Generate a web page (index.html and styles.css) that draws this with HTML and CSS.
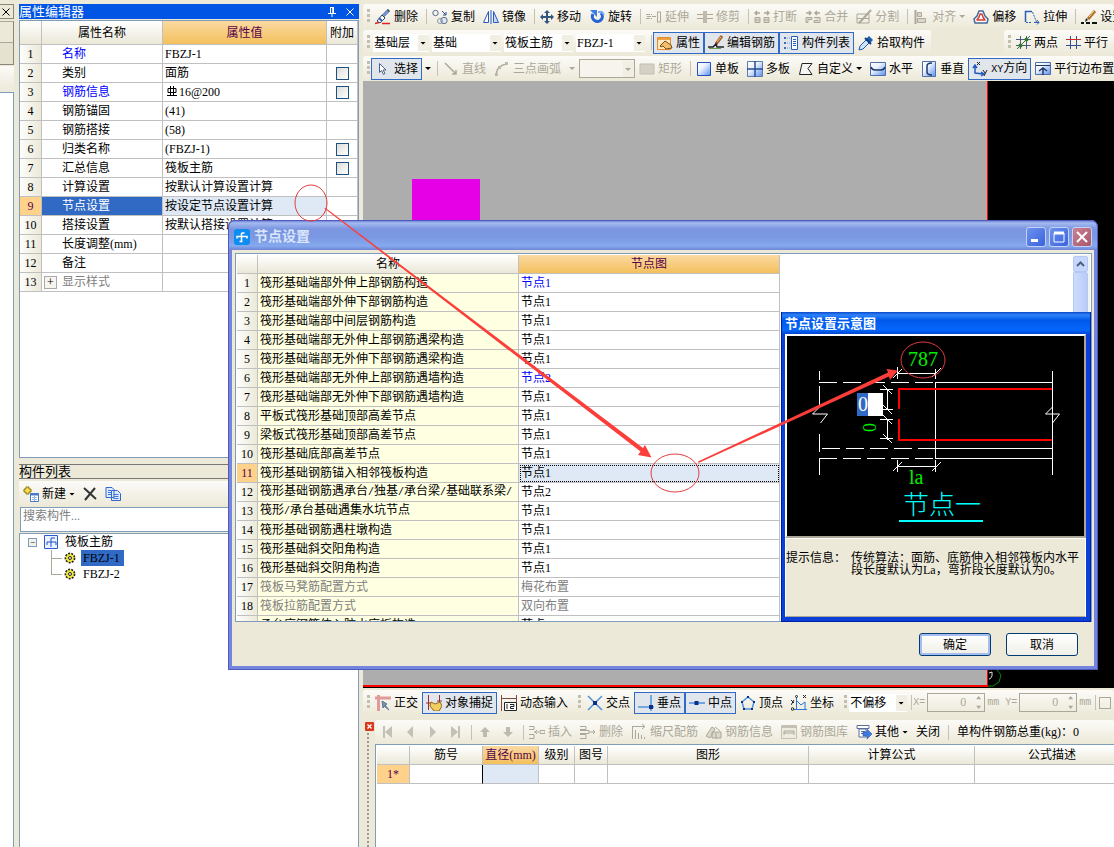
FILE: index.html
```html
<!DOCTYPE html>
<html lang="zh-CN">
<head>
<meta charset="utf-8">
<title>节点设置</title>
<link rel="stylesheet" href="styles.css">
</head>
<body>
<svg class="defs" aria-hidden="true">
  <defs>
    <linearGradient id="blueFill" x1="0" y1="0" x2="1" y2="1"><stop offset="0" stop-color="#fff"/><stop offset="0.4" stop-color="#eaf1fe"/><stop offset="1" stop-color="#5b8ff0"/></linearGradient>
    <symbol id="gear" viewBox="0 0 12 12"><circle cx="6" cy="6" r="4.6" fill="#f4ea3a" stroke="#222" stroke-width="1.6" stroke-dasharray="2 1.2"/><circle cx="6" cy="6" r="1.5" fill="#fff" stroke="#222"/></symbol>
  </defs>
</svg>

<div class="app">
  <aside class="edge">
    <button class="edge-close" aria-label="关闭侧栏"><svg width="8" height="8" viewBox="0 0 8 8"><path d="M.5.5l7 7M7.5.5l-7 7" stroke="#000"/></svg></button>
    <div class="edge-head"></div>
    <div class="edge-tab"></div>
    <div class="edge-tool"></div>
    <div class="edge-body"></div>
  </aside>

  <div class="dock">
    <section class="props">
      <header class="dock-title"><h2>属性编辑器</h2>
        <button aria-label="固定"><svg width="8" height="10" viewBox="0 0 8 10"><path d="M2 .5h4M2.500 0v6M5.500 0v6M4.700 0v6M0 6.500h8M4 7v3" stroke="#fff" fill="none"/></svg></button>
        <button aria-label="关闭"><svg width="8" height="8" viewBox="0 0 8 8"><path d="M.5.5l7 7M7.5.5l-7 7" stroke="#fff"/></svg></button>
      </header>
      <div class="props-frame">
        <table class="grid props-grid">
          <colgroup><col class="c-num"><col class="c-name"><col class="c-val"><col class="c-add"></colgroup>
          <thead><tr><th></th><th>属性名称</th><th class="hot">属性值</th><th>附加</th></tr></thead>
          <tbody>
            <tr><th>1</th><td class="blue">名称</td><td>FBZJ-1</td><td></td></tr>
            <tr><th>2</th><td>类别</td><td>面筋</td><td><input type="checkbox" aria-label="附加类别"></td></tr>
            <tr><th>3</th><td class="blue">钢筋信息</td><td><svg class="rebar" width="10" height="10" viewBox="0 0 10 10"><path d="M1 2.500h8v4H1zM3.500 0v9M6.500 0v9M0 9.500h10" stroke="#000" fill="none"/></svg>16@200</td><td><input type="checkbox" aria-label="附加钢筋信息"></td></tr>
            <tr><th>4</th><td>钢筋锚固</td><td>(41)</td><td></td></tr>
            <tr><th>5</th><td>钢筋搭接</td><td>(58)</td><td></td></tr>
            <tr><th>6</th><td>归类名称</td><td>(FBZJ-1)</td><td><input type="checkbox" aria-label="附加归类名称"></td></tr>
            <tr><th>7</th><td>汇总信息</td><td>筏板主筋</td><td><input type="checkbox" aria-label="附加汇总信息"></td></tr>
            <tr><th>8</th><td>计算设置</td><td>按默认计算设置计算</td><td></td></tr>
            <tr class="current"><th>9</th><td>节点设置</td><td>按设定节点设置计算</td><td></td></tr>
            <tr><th>10</th><td>搭接设置</td><td>按默认搭接设置计算</td><td></td></tr>
            <tr><th>11</th><td>长度调整(mm)</td><td></td><td></td></tr>
            <tr><th>12</th><td>备注</td><td></td><td></td></tr>
            <tr><th>13</th><td class="dim tree-cell"><button class="plus" aria-label="展开">+</button>显示样式</td><td></td><td></td></tr>
          </tbody>
        </table>
      </div>
    </section>

    <section class="parts">
      <header class="parts-title"><h2>构件列表</h2></header>
      <div class="parts-tools">
        <button class="tb"><svg width="16" height="16" viewBox="0 0 16 16"><path d="M3 1h3v2h2v3H6v2H3V6H1V3h2z" fill="#f7df4a" stroke="#8a7412"/><path d="M7.500 7.500h8v8h-8z" fill="#fff" stroke="#4a78c8"/><path d="M7 8.500h9" stroke="#4a78c8" stroke-width="2"/><path d="M9 11.500h5M9 13.500h5M11.500 10v5" stroke="#9ab8e6"/></svg>新建<i class="arr"></i></button>
        <button class="tb" aria-label="删除构件"><svg width="14" height="14" viewBox="0 0 14 14"><path d="M1 1l12 11M12 1L2 13" stroke="#333" stroke-width="2"/></svg></button>
        <button class="tb" aria-label="复制构件"><svg width="16" height="14" viewBox="0 0 16 14"><path d="M1 .5h6l2 2v8H1zM6.500 3.500h6l3 3v7h-9z" fill="#dfeafc" stroke="#3567c8"/><path d="M3 3.500h3M3 5.500h3M3 7.500h3M8.500 7.500h5M8.500 9.500h5M8.500 11.500h5" stroke="#3f78dc"/></svg></button>
      </div>
      <input class="search" type="text" placeholder="搜索构件..." aria-label="搜索构件">
      <div class="tree">
        <div class="node"><button class="minus" aria-label="折叠">−</button><svg width="14" height="14" viewBox="0 0 14 14"><path d="M.5.5h13v13H.5z" fill="#eef4ff" stroke="#2a5cd0"/><path d="M3 10V7h9v3M7 12V3h4" stroke="#1c50c8" fill="none"/></svg><span>筏板主筋</span></div>
        <div class="node leaf"><svg width="12" height="12"><use href="#gear"/></svg><span class="picked">FBZJ-1</span></div>
        <div class="node leaf last"><svg width="12" height="12"><use href="#gear"/></svg><span>FBZJ-2</span></div>
      </div>
    </section>
  </div>

  <main class="work">
    <div class="bar">
      <i class="grip"></i>
      <button class="tb"><svg width="16" height="16" viewBox="0 0 16 16"><path d="M14 1L7 8" stroke="#445" stroke-width="3"/><path d="M13 2L8 7" stroke="#6ea0ee" stroke-width="2"/><path d="M7 6l3 3-5 5-3-2z" fill="#fff" stroke="#345"/><path d="M4 9l3 3" stroke="#2c62d0" stroke-width="2"/><path d="M0 14.500l4-1M7 14.500h8" stroke="#e02020" stroke-width="1.500"/></svg>删除</button>
      <i class="sep"></i>
      <button class="tb"><svg width="16" height="16" viewBox="0 0 16 16" fill="none"><circle cx="3.500" cy="4" r="2.700" stroke="#5a6c88"/><circle cx="12" cy="11.500" r="3.200" fill="#dfe6f0" stroke="#5a6c88"/><circle cx="8" cy="12" r="2.500" stroke="#8a98ae"/><path d="M10 2l4 4M14 3v3h-3" stroke="#2a4c90"/></svg>复制</button>
      <button class="tb"><svg width="16" height="16" viewBox="0 0 16 16"><path d="M5.500 2.500v11h-5z" fill="#fff" stroke="#2658c0"/><path d="M10.500 2.500v11h5z" fill="#c6dafc" stroke="#2658c0"/><path d="M8 1v14" stroke="#2658c0"/></svg>镜像</button>
      <i class="sep"></i>
      <button class="tb"><svg width="14" height="14" viewBox="0 0 14 14"><path d="M7 0l3 3H8v3h3V4l3 3-3 3V8H8v3h2l-3 3-3-3h2V8H3v2L0 7l3-3v2h3V3H4z" fill="#33557e"/></svg>移动</button>
      <button class="tb"><svg width="16" height="16" viewBox="0 0 16 16"><path d="M4 5a5 5 0 1 0 8-1" fill="none" stroke="#2863d2" stroke-width="3"/><path d="M1 1h7v7z" fill="#3c7ce6"/><path d="M9 3h4l2 3" fill="none" stroke="#7cabf6" stroke-width="2"/></svg>旋转</button>
      <i class="sep"></i>
      <button class="tb" disabled><svg width="16" height="16" viewBox="0 0 16 16"><path d="M0 5.500h6M0 9.500h6M1 7.500h9" stroke="#aca899" stroke-dasharray="4 1"/><path d="M11.500 3v10M14.500 3v10M11 13h4M11 3h4" stroke="#aca899"/></svg>延伸</button>
      <button class="tb" disabled><svg width="16" height="16" viewBox="0 0 16 16"><path d="M0 5.500h6M0 9.500h6M10 5.500h6M10 9.500h6" stroke="#aca899"/><path d="M7 2v12M9 2v12" stroke="#aca899" stroke-width="1.500"/></svg>修剪</button>
      <i class="sep"></i>
      <button class="tb" disabled><svg width="16" height="16" viewBox="0 0 16 16"><path d="M1 4h5M3 2L1 4l2 2M10 4h5M13 2l2 2-2 2" fill="none" stroke="#aca899" stroke-width="1.500"/><path d="M1 8.500h5v5H1zM10 8.500h5v5h-5zM1 11h5M10 11h5" fill="#dcd9cc" stroke="#aca899"/></svg>打断</button>
      <button class="tb" disabled><svg width="16" height="16" viewBox="0 0 16 16"><path d="M1 4h5M4 2l2 2-2 2M10 4h5M12 2l-2 2 2 2" fill="none" stroke="#aca899" stroke-width="1.500"/><path d="M1 8.500h6v2H3v3H1zM9 8.500h6v5H9v-2h4" fill="#dcd9cc" stroke="#aca899"/></svg>合并</button>
      <button class="tb" disabled><svg width="16" height="16" viewBox="0 0 16 16"><path d="M1 5h12v9H1zM1 9.500h12" fill="none" stroke="#aca899"/><path d="M15 1L5 12l-2 2" stroke="#aca899" stroke-width="2"/></svg>分割</button>
      <i class="sep"></i>
      <button class="tb" disabled><svg width="16" height="16" viewBox="0 0 16 16"><path d="M2.500 1v14" stroke="#aca899" stroke-width="2"/><path d="M4.500 3.500h4v4h-4zM4.500 9.500h8v4h-8z" fill="#dad7ca" stroke="#aca899"/></svg>对齐<i class="arr"></i></button>
      <button class="tb"><svg width="16" height="16" viewBox="0 0 16 16"><path d="M6 2h4l2 5 3 3-1 4H2l-1-4 3-3z" fill="#fff" stroke="#456896" stroke-width="1.500" stroke-linejoin="round"/><path d="M7 5h2l1 3 2 3H4l2-3z" fill="#fff" stroke="#d83c30" stroke-width="1.500" stroke-linejoin="round"/></svg>偏移</button>
      <button class="tb"><svg width="16" height="16" viewBox="0 0 16 16" fill="none"><path d="M1.500 13V2.500H8" stroke="#2c5cb4" stroke-width="1.500"/><path d="M8.500 3l4 10M2 13.500h6" stroke="#2c5cb4" stroke-dasharray="2 1"/><path d="M10 13.500h5M13 11l2 2.500-2 2" stroke="#2c5cb4"/></svg>拉伸</button>
      <i class="sep"></i>
      <button class="tb"><svg width="16" height="16" viewBox="0 0 16 16"><path d="M14 2L7 10" stroke="#b06a28" stroke-width="3"/><path d="M13 2l-5 6" stroke="#f4d68a"/><path d="M5 9l2 2-3 2z" fill="#222"/><path d="M0 14h3M5 14h4M11 14h5" stroke="#111" stroke-width="2"/></svg>设置</button>
    </div>

    <div class="bar-row">
      <div class="bar short">
        <i class="grip"></i>
        <div class="combos">
          <span class="combo c-s"><select aria-label="楼层"><option>基础层</option></select></span>
          <span class="combo"><select aria-label="构件分类"><option>基础</option></select></span>
          <span class="combo"><select aria-label="构件类型"><option>筏板主筋</option></select></span>
          <span class="combo"><select aria-label="构件名称"><option>FBZJ-1</option></select></span>
        </div>
        <i class="sep"></i>
        <button class="tb on"><svg width="16" height="16" viewBox="0 0 16 16"><path d="M.5 2.500h13v12H.5z" fill="#ffe9c0" stroke="#e88a28"/><path d="M1 3h12v2H1z" fill="#f0a040"/><path d="M3 11l5-5 6 4 1 3-6 1-3-3-2 1z" fill="#f2c06a" stroke="#7a4a12"/></svg>属性</button>
        <button class="tb on"><svg width="16" height="16" viewBox="0 0 16 16"><path d="M14 1L8 9" stroke="#a85c28" stroke-width="3"/><path d="M13 2L9 7" stroke="#f0c878"/><path d="M0 12h5l3-3 1 3h7" stroke="#222" stroke-width="1.500" fill="none"/><path d="M1 13.500h12" stroke="#6f9a50"/></svg>编辑钢筋</button>
        <button class="tb on"><svg width="16" height="16" viewBox="0 0 16 16"><path d="M1 2h2v2H1zM1 7h2v2H1zM1 12h2v2H1z" fill="#3e6cb8"/><path d="M4 3h3M4 8h3M4 13h3" stroke="#7a94c0" stroke-dasharray="1 1"/><path d="M8.500 1.500h6v13h-6z" fill="#fff" stroke="#2a5cc0"/><path d="M10 4.500h3M10 6.500h3M10 8.500h3M10 10.500h3" stroke="#2a5cc0"/></svg>构件列表</button>
        <button class="tb"><svg width="16" height="16" viewBox="0 0 16 16"><path d="M11 1l4 4-3 3-4-4z" fill="#1c5cb0"/><path d="M8 5l3 3-6 6-4 1 1-4z" fill="#cfe4fb" stroke="#1d5cae"/><path d="M7 3l6 6" stroke="#123e80" stroke-width="2"/></svg>拾取构件</button>
      </div>
      <div class="bar short tail">
        <i class="grip"></i>
        <button class="tb"><svg width="15" height="15" viewBox="0 0 15 15"><path d="M4.500 1v13M10.500 1v13M0 4.500h15M0 10.500h15" stroke="#4c5a80"/><path d="M1 14L14 1" stroke="#2f7a2a"/><circle cx="4.500" cy="10.500" r="2" fill="#2f7a2a"/><circle cx="10.500" cy="4.500" r="2" fill="#2f7a2a"/></svg>两点</button>
        <button class="tb"><svg width="15" height="15" viewBox="0 0 15 15"><path d="M4.500 1v13M10.500 1v13M0 10.500h15" stroke="#34508c"/><path d="M0 4.500h15" stroke="#d02828"/></svg>平行</button>
      </div>
    </div>

    <div class="bar">
      <i class="grip"></i>
      <button class="tb on"><svg width="16" height="16" viewBox="0 0 16 16"><path d="M4.500 2.500v9l2-2 2 4 1.500-1-2-3.500h3z" fill="#fff" stroke="#4a6286"/></svg>选择</button>
      <button class="drop" aria-label="选择方式"><i class="arr"></i></button>
      <i class="sep"></i>
      <button class="tb" disabled><svg width="16" height="16" viewBox="0 0 16 16"><path d="M2 2l11 11M13 9v4H9" stroke="#aca899" stroke-width="1.500" fill="none"/></svg>直线</button>
      <button class="tb" disabled><svg width="16" height="16" viewBox="0 0 16 16"><path d="M2 14Q3 4 13 3" stroke="#aca899" stroke-width="1.500" fill="none"/><path d="M1 12h3v3H1zM4 5h3v3H4zM11 1h3v3h-3z" fill="#bdb9aa"/></svg>三点画弧</button>
      <button class="drop" disabled aria-label="画弧方式"><i class="arr"></i></button>
      <span class="combo off"><select disabled aria-label="画弧参数"><option></option></select></span>
      <button class="tb" disabled><svg width="16" height="16" viewBox="0 0 16 16"><path d="M1 3h14v10H1z" fill="#d5d2c5" stroke="#c3bfb1"/></svg>矩形</button>
      <i class="sep"></i>
      <button class="tb"><svg width="16" height="16" viewBox="0 0 16 16"><path d="M1.500 1.500h13v13h-13z" fill="url(#blueFill)" stroke="#2450b8"/></svg>单板</button>
      <button class="tb"><svg width="16" height="16" viewBox="0 0 16 16"><path d="M.5.5h15v15H.5z" fill="url(#blueFill)" stroke="#5a7cae"/><path d="M8 0v16M0 8h16" stroke="#274c94" stroke-width="1.500"/></svg>多板</button>
      <button class="tb"><svg width="16" height="16" viewBox="0 0 16 16"><path d="M4 2.500h10l-4 5 4 6H1.500z" fill="#f6f6f4" stroke="#222"/></svg>自定义<i class="arr"></i></button>
      <button class="tb"><svg width="16" height="16" viewBox="0 0 16 16"><path d="M.5 1.500h15v13H.5z" fill="url(#blueFill)" stroke="#4e6fa8"/><path d="M1 6q1 3 4 3h6q3 0 4-3" fill="none" stroke="#1f3868" stroke-width="1.500"/></svg>水平</button>
      <button class="tb"><svg width="16" height="16" viewBox="0 0 16 16"><path d="M1.500.5h13v15h-13z" fill="url(#blueFill)" stroke="#4e6fa8"/><path d="M11 2q-5 0-5 3v6q0 3 5 3" fill="none" stroke="#1f3868" stroke-width="1.500"/></svg>垂直</button>
      <button class="tb on"><svg width="16" height="16" viewBox="0 0 16 16" fill="none"><path d="M3 5v7l8 1M1 7l2-3 2 3M9 11l3 2-3 2" stroke="#1e5cc4" stroke-width="1.500"/><path d="M5 1l3 3M8 1L5 4M11 9l2 3M15 9l-3 6" stroke="#222"/></svg><span><span class="mono">XY</span>方向</span></button>
      <button class="tb"><svg width="16" height="16" viewBox="0 0 16 16"><path d="M.5 1.500h15v12H.5z" fill="url(#blueFill)" stroke="#4e6fa8"/><path d="M1 4.500h14" stroke="#1f3868"/><path d="M8 7v7M4 10l4-3 4 3" stroke="#1f3868" stroke-width="1.500" fill="none"/></svg>平行边布置</button>
    </div>

    <div class="canvas">
      <div class="model"><div class="slab"></div></div>
      <svg class="axis" width="14" height="18" viewBox="0 0 14 18"><path d="M1 3l3-1v4q-2 4-3 3" stroke="#ddd" fill="none"/><path d="M9 0l4 5-2 7-6 4H0" stroke="#0a8a0a" fill="none"/></svg>
    </div>

    <div class="bar snap">
      <i class="grip"></i>
      <button class="tb"><svg width="16" height="16" viewBox="0 0 16 16"><path d="M0 3h16M3.500 0v16" stroke="#e09a9a" stroke-width="3"/><path d="M7 6l5 3-2 1 4 5-5-4-1 2z" fill="#8096ae" stroke="#5c7390"/></svg>正交</button>
      <button class="tb on"><svg width="16" height="16" viewBox="0 0 16 16"><path d="M2.500 0v15M13.500 0v9M0 8h5M11 6h5" stroke="#9a2c2c"/><path d="M5 7l4 2 5-2 2 4-3 5H8l-4-5z" fill="#f2cd62" stroke="#8e6a1c"/></svg>对象捕捉</button>
      <button class="tb"><svg width="16" height="16" viewBox="0 0 16 16"><path d="M.5 0v16M15.500 0v7M1 3.500h14" stroke="#7d4a4a"/><path d="M3.500 7.500h12v8h-12z" fill="#fff" stroke="#222"/><path d="M6 9v5M9 9.500h4v2H9.500v2H13" stroke="#222" fill="none"/></svg>动态输入</button>
      <i class="grip mid"></i>
      <button class="tb"><svg width="16" height="16" viewBox="0 0 16 16"><path d="M1 1l14 14M15 1L1 15" stroke="#4f94dc" stroke-width="1.500"/><path d="M6 6h4v4H6z" fill="#0b2f86"/></svg>交点</button>
      <button class="tb on"><svg width="16" height="16" viewBox="0 0 16 16"><path d="M0 12h16M13 0v16" stroke="#4f94dc" stroke-width="1.500"/><path d="M11 10h4v4h-4z" fill="#0b2f86"/></svg>垂点</button>
      <button class="tb on"><svg width="16" height="16" viewBox="0 0 16 16"><path d="M0 8h16" stroke="#6fa4e2" stroke-width="2"/><path d="M5.500 6h4v4h-4z" fill="#0b2f86"/></svg>中点</button>
      <button class="tb"><svg width="16" height="16" viewBox="0 0 16 16"><path d="M8 2l6 5-2 7H4L2 7z" fill="none" stroke="#4f94dc" stroke-width="1.500"/><path d="M7 1h2v2H7zM13 6h2v2h-2zM1 6h2v2H1zM3 13h2v2H3zM11 13h2v2h-2z" fill="#0b2f86"/></svg>顶点</button>
      <button class="tb"><svg width="16" height="16" viewBox="0 0 16 16" fill="none"><path d="M5.500 2v13M3 14.500h13M6 6l4 4 4-3v7" stroke="#2a74d8"/><path d="M0 5l3 3M3 5l-3 5M12 0l3 3M15 0l-3 3" stroke="#222"/><circle cx="5.500" cy="1.500" r="1" stroke="#222"/><circle cx="1.500" cy="14" r="1.300" stroke="#222"/></svg>坐标</button>
      <i class="grip mid"></i>
      <span class="combo c-off"><select aria-label="偏移方式"><option>不偏移</option></select></span>
      <i class="sep"></i>
      <label class="spin">X=<input type="text" value="0" disabled><i class="ud"></i>mm</label>
      <label class="spin end">Y=<input type="text" value="0" disabled><i class="ud"></i>mm</label>
      <i class="sep"></i>
      <input class="flag" type="checkbox" disabled aria-label="旋转角度">
    </div>

    <div class="detail">
      <div class="detail-edge"><button aria-label="关闭明细"><svg width="9" height="9" viewBox="0 0 9 9"><rect width="9" height="9" rx="1" fill="#d8381c"/><path d="M2.500 2.500l4 4M6.500 2.500l-4 4" stroke="#fff" stroke-width="1.300"/></svg></button></div>
      <div class="detail-main">
        <div class="bar detail-bar">
          <button class="nav" disabled aria-label="首条"><svg width="10" height="12"><path d="M1 0h2v12H1zM10 0v12L3 6z" fill="#c3c0b6"/></svg></button>
          <button class="nav" disabled aria-label="上一条"><svg width="10" height="12"><path d="M8 0v12L2 6z" fill="#c3c0b6"/></svg></button>
          <button class="nav" disabled aria-label="下一条"><svg width="10" height="12"><path d="M2 0v12l6-6z" fill="#c3c0b6"/></svg></button>
          <button class="nav" disabled aria-label="末条"><svg width="10" height="12"><path d="M7 0h2v12H7zM0 0v12l7-6z" fill="#c3c0b6"/></svg></button>
          <i class="sep"></i>
          <button class="nav" disabled aria-label="上移"><svg width="10" height="10"><path d="M5 0l5 5H7v5H3V5H0z" fill="#bdbab0"/></svg></button>
          <button class="nav" disabled aria-label="下移"><svg width="10" height="10"><path d="M5 10L0 5h3V0h4v5h3z" fill="#bdbab0"/></svg></button>
          <i class="sep"></i>
          <button class="tb" disabled><svg width="16" height="16" viewBox="0 0 16 16" fill="none"><path d="M0 2.500h5v3H0M0 10.500h5v4H0M11 6.500h5v3h-5zM5 8h5M8 6L6 8l2 2" stroke="#aca899"/></svg>插入</button>
          <button class="tb" disabled><svg width="16" height="16" viewBox="0 0 16 16" fill="none"><path d="M0 2.500h6v3H0M0 10.500h6v4H0M0 6.500h9v3H0M9 8h6M13 6l2 2-2 2" stroke="#aca899"/></svg>删除</button>
          <button class="tb" disabled><svg width="16" height="16" viewBox="0 0 16 16" fill="none"><path d="M1.500 3v12M4.500 6v9M7.500 9v6M10.500 11v4M13.500 13v2M1 2.500h12M11 0l3 2.500L11 5" stroke="#aca899"/></svg>缩尺配筋</button>
          <button class="tb" disabled><svg width="16" height="16" viewBox="0 0 16 16"><path d="M0 12l6-9 3 2-5 9zM6 8h9v6H6z" fill="#dad7cb" stroke="#aca899"/><path d="M9 3l5 4M10 9v6" stroke="#aca899"/></svg>钢筋信息</button>
          <button class="tb" disabled><svg width="16" height="16" viewBox="0 0 16 16"><path d="M.5 1.500h15v13H.5z" fill="#eeebe0" stroke="#c4c0b2"/><path d="M1 3h14" stroke="#c4c0b2" stroke-width="2"/><path d="M3 11V7h10v4M3 9h10" stroke="#aca899" fill="none"/></svg>钢筋图库</button>
          <button class="tb"><svg width="16" height="16" viewBox="0 0 16 16"><path d="M1 1.500h12v3H1zM3 5h7v8H3z" fill="#fff" stroke="#5a7098"/><path d="M5 7.500h4M5 9.500h3" stroke="#5a7098"/><path d="M7 8h4V5l5 5-5 5v-3H7z" fill="#3d7be0" stroke="#1d4ca8" stroke-width=".5"/></svg>其他<i class="arr"></i></button>
          <button class="tb">关闭</button>
          <i class="sep"></i>
          <span class="total">单构件钢筋总重(kg)：0</span>
        </div>
        <div class="detail-frame">
          <table class="grid detail-grid">
            <colgroup><col class="d1"><col class="d2"><col class="d3"><col class="d4"><col class="d5"><col class="d6"><col class="d7"><col></colgroup>
            <thead><tr><th></th><th>筋号</th><th class="hot">直径(mm)</th><th>级别</th><th>图号</th><th>图形</th><th>计算公式</th><th>公式描述</th></tr></thead>
            <tbody><tr><th class="hot-num">1*</th><td class="before-edit"></td><td class="edit"></td><td></td><td></td><td></td><td></td><td></td></tr></tbody>
          </table>
        </div>
      </div>
    </div>
  </main>
</div>

<section class="dialog" role="dialog" aria-label="节点设置">
  <header class="dlg-title">
    <svg width="16" height="16" viewBox="0 0 16 16"><rect width="16" height="16" rx="3" fill="#0d8cf2"/><path d="M3 9.500V7.500h10v2M7.500 13V4M7.500 4h3M5.500 12.500h3" stroke="#fff" stroke-width="1.500" fill="none"/></svg>
    <h1>节点设置</h1>
    <button aria-label="最小化"><svg width="12" height="12"><path d="M1 8h7v3H1z" fill="#fff"/></svg></button>
    <button aria-label="最大化"><svg width="12" height="12"><path d="M1 2h10v9H1z" fill="none" stroke="#fff"/><path d="M1 2h10" stroke="#fff" stroke-width="3"/></svg></button>
    <button class="x" aria-label="关闭"><svg width="12" height="12"><path d="M1 1l10 10M11 1L1 11" stroke="#fff" stroke-width="2"/></svg></button>
  </header>
  <div class="dlg-body">
    <div class="list-frame">
      <table class="grid node-grid">
        <colgroup><col class="n-num"><col class="n-name"><col class="n-val"></colgroup>
        <thead><tr><th></th><th>名称</th><th class="hot">节点图</th></tr></thead>
        <tbody>
          <tr><th>1</th><td>筏形基础端部外伸上部钢筋构造</td><td class="blue">节点1</td></tr>
          <tr><th>2</th><td>筏形基础端部外伸下部钢筋构造</td><td>节点1</td></tr>
          <tr><th>3</th><td>筏形基础端部中间层钢筋构造</td><td>节点1</td></tr>
          <tr><th>4</th><td>筏形基础端部无外伸上部钢筋遇梁构造</td><td>节点1</td></tr>
          <tr><th>5</th><td>筏形基础端部无外伸下部钢筋遇梁构造</td><td>节点1</td></tr>
          <tr><th>6</th><td>筏形基础端部无外伸上部钢筋遇墙构造</td><td class="blue">节点2</td></tr>
          <tr><th>7</th><td>筏形基础端部无外伸下部钢筋遇墙构造</td><td>节点1</td></tr>
          <tr><th>8</th><td>平板式筏形基础顶部高差节点</td><td>节点1</td></tr>
          <tr><th>9</th><td>梁板式筏形基础顶部高差节点</td><td>节点1</td></tr>
          <tr><th>10</th><td>筏形基础底部高差节点</td><td>节点1</td></tr>
          <tr class="picked-row"><th>11</th><td>筏形基础钢筋锚入相邻筏板构造</td><td>节点1</td></tr>
          <tr><th>12</th><td>筏形基础钢筋遇承台<span class="mono">/</span>独基<span class="mono">/</span>承台梁<span class="mono">/</span>基础联系梁<span class="mono">/</span></td><td>节点2</td></tr>
          <tr><th>13</th><td>筏形<span class="mono">/</span>承台基础遇集水坑节点</td><td>节点1</td></tr>
          <tr><th>14</th><td>筏形基础钢筋遇柱墩构造</td><td>节点1</td></tr>
          <tr><th>15</th><td>筏形基础斜交阳角构造</td><td>节点1</td></tr>
          <tr><th>16</th><td>筏形基础斜交阴角构造</td><td>节点1</td></tr>
          <tr><th>17</th><td class="dim">筏板马凳筋配置方式</td><td class="dim">梅花布置</td></tr>
          <tr><th>18</th><td class="dim">筏板拉筋配置方式</td><td class="dim">双向布置</td></tr>
          <tr><th></th><td>承台底钢筋伸入防水底板构造</td><td>节点1</td></tr>
        </tbody>
      </table>
      <div class="scroll"><button aria-label="向上滚动"><svg width="9" height="6" viewBox="0 0 9 6"><path d="M1 5l3.500-3.500L8 5" fill="none" stroke="#4d6185" stroke-width="2"/></svg></button><div class="thumb"></div></div>
    </div>
    <footer class="dlg-foot"><button class="push main">确定</button><button class="push">取消</button></footer>
  </div>

  <section class="preview">
    <h2>节点设置示意图</h2>
    <div class="preview-in">
      <div class="drawing">
        <svg width="298" height="200" viewBox="787 336 298 200">
          <g fill="none" stroke="#fff">
            <path d="M819.500 371v9M819.500 386v21l-7 7h15l-7 9M819.500 434v18M819.500 475v-17"/>
            <path d="M819 382.500h116M819 458.500h116" stroke-dasharray="18 6"/>
            <path d="M822 448.500h113" stroke-dasharray="18 6"/>
            <path d="M935 382.500h117M935 448.500h117M935 458.500h117M935.500 382v76"/>
            <path d="M1052.500 371v36l-7 7h14l-7 9M1052.500 407v68"/>
            <path d="M897 373.500h39M897.500 367v12M935.500 369v10M893 378l9-9M932 377l9-9"/>
            <path d="M897 466.500h39M897.500 460v12M935.500 460v12M893 471l9-9M932 471l9-9"/>
            <path d="M887.500 389v21M880 389.500h13M880 409.500h13M883 385l9 9M883 405l9 9M887.500 419v21M880 419.500h13M880 438.500h13M883 415l9 9M883 434l9 9"/>
          </g>
          <path d="M1052 389H899v20M899 419v21h153" fill="none" stroke="#f00" stroke-width="2"/>
          <text x="908" y="366" class="cad big">787</text>
          <text x="909" y="484" class="cad big">la</text>
          <text x="863" y="423" class="cad small" transform="rotate(90 863 423)">0</text>
          <text x="903" y="514" class="cad title">节点一</text>
          <path d="M899 521h84" stroke="#0ff" stroke-width="2"/>
        </svg>
        <input class="dim-edit" type="text" value="0" aria-label="弯折长度">
      </div>
      <div class="hint"><span>提示信息：</span><p>传统算法：面筋、底筋伸入相邻筏板内水平段长度默认为La，弯折段长度默认为0。</p></div>
    </div>
  </section>
</section>

<svg class="marks" width="960" height="500" viewBox="0 0 960 500" aria-hidden="true">
  <g fill="none" stroke="#e23c3c"><ellipse cx="311" cy="203" rx="16" ry="18"/><ellipse cx="675" cy="473" rx="24" ry="19"/><ellipse cx="923" cy="360" rx="22" ry="18"/></g>
  <g fill="#fb3e3a"><path d="M325 207.500L643 448 645 445 651.500 457.500 638 455 640.500 451.500 324.500 208.500z"/><path d="M698 461.500L888 372.500 886.500 369 898 370.500 890 380 889 376.500 698.500 463z"/></g>
</svg>
</body>
</html>
```

FILE: styles.css
```css
* { box-sizing: border-box; }

body {
  margin: 0;
  height: 100vh;
  overflow: hidden;
  position: relative;
  background: #ece9d8;
  color: #000;
  font: 12px/14px "Liberation Serif", "Noto Sans CJK SC", sans-serif;
}

h1, h2, p { margin: 0; font-size: inherit; font-weight: normal; }

button, input, select { font: inherit; color: inherit; margin: 0; padding: 0; border: 0; border-radius: 0; background: none; }
button { display: inline-flex; align-items: center; justify-content: center; flex: none; }
button, span, label, h1, h2, th, td { white-space: nowrap; }
svg { display: block; flex: none; }

.defs { position: absolute; width: 0; height: 0; }
.mono { font-family: "Liberation Mono", monospace; font-size: 10px; }

.app { display: flex; height: 100%; padding-top: 4px; }

/* Collapsed panel on the far left */
.edge { width: 14px; flex: none; display: flex; flex-direction: column; }
.edge-close { height: 15px; border: 1px solid #8a8778; border-left: 0; justify-content: flex-start; padding-left: 2px; }
.edge-head { height: 22px; margin-top: 2px; border-top: 1px solid #aca899; border-right: 1px solid #8a8778; border-bottom: 1px solid #aca899; }
.edge-tab { height: 22px; border-right: 1px solid #8a8778; border-bottom: 1px solid #8a8778; background: #e6e2d0; }
.edge-tool { height: 26px; margin-top: 1px; background: linear-gradient(#fbfaf6, #ece9d8); }
.edge-body { flex: 1; background: #fff; border-top: 1px solid #7f9db9; border-right: 1px solid #7f9db9; }

/* Left dock */
.dock { width: 341px; flex: none; margin: 0 4px 0 4px; padding-left: 1px; display: flex; flex-direction: column; }
.props { flex: none; height: 454px; display: flex; flex-direction: column; }
.dock-title { display: flex; align-items: center; height: 15px; padding-right: 5px; gap: 10px; background: #0055e5; color: #fff; font-size: 13px; line-height: 15px; }
.dock-title h2 { flex: 1; }
.props-frame { flex: 1; margin-top: 1px; border: 1px solid #7f9db9; background: #fff; }

.grid { border-collapse: separate; border-spacing: 0; table-layout: fixed; }
.grid th, .grid td {
  height: 19px;
  padding: 0;
  overflow: hidden;
  font-weight: normal;
  border-right: 1px solid #c0c0c0;
  border-bottom: 1px solid #c0c0c0;
}
.grid td { background: #fff; padding-left: 2px; text-align: left; }
.grid th { background: linear-gradient(#fff, #ebe8d8); text-align: center; }
.grid tbody th { background: linear-gradient(to right, #fdfdfb, #ece9d8); }
.grid th.hot { background: linear-gradient(#fad9a2, #f3c05c); color: #57004c; }
.grid .blue { color: #00f; }
.grid .dim { color: #808080; }

.props-grid { width: 100%; }
.props-grid thead th { height: 24px; }
.c-num { width: 22px; }
.c-name { width: 121px; }
.c-val { width: 164px; }
.props-grid td:nth-child(2) { padding-left: 20px; }
.props-grid td.tree-cell { padding-left: 2px; }
.props-grid td:nth-child(4) { padding-left: 9px; }
.props-grid input { appearance: none; display: block; width: 13px; height: 13px; border: 1px solid #1c5180; background: linear-gradient(135deg, #dcdcd7, #fff); }
.rebar { display: inline-block; margin: 0 2px; }
.plus { width: 13px; height: 13px; margin-right: 5px; border: 1px solid #aaa; background: #f6f5ee; color: #000; line-height: 11px; }
.grid .current th { background: #ffd28c; color: #57004c; }
.grid .current td:nth-child(2) { background: #316ac5; color: #fff; }
.grid .current td:nth-child(3) { background: #dfe9f6; }

.parts { flex: 1; margin-top: 6px; display: flex; flex-direction: column; }
.parts-title { height: 15px; border-top: 1px solid #777; border-bottom: 1px solid #777; line-height: 13px; font-size: 13px; }
.parts-tools { display: flex; align-items: center; height: 26px; margin-top: 2px; background: linear-gradient(#fcfbf8, #ece9d8); }
.parts-tools .tb { padding: 0 4px; }
.search { height: 25px; margin-left: 1px; padding-left: 2px; padding-bottom: 6px; border: 1px solid #7f9db9; background: #fff; }
.search::placeholder { color: #808080; opacity: 1; }
.tree { flex: 1; margin-top: 1px; border: 1px solid #7f9db9; border-bottom: 0; background: #fff; }
.node { display: flex; align-items: center; height: 16px; padding-left: 8px; }
.node span { margin-left: 5px; padding: 0 2px; line-height: 16px; }
.node .picked { width: 43px; background: #316ac5; }
.minus { width: 9px; height: 9px; margin-right: 7px; border: 1px solid #7b9ebd; background: #f2f1ea; line-height: 7px; font-size: 9px; }
.leaf { padding-left: 44px; background: linear-gradient(#aca899, #aca899) 31px 8px / 11px 1px no-repeat, linear-gradient(#aca899, #aca899) 31px 0 / 1px 16px no-repeat; }
.leaf.last { background-size: 11px 1px, 1px 8px; }

/* Toolbars */
.work { flex: 1; min-width: 0; display: flex; flex-direction: column; }
.bar { display: flex; align-items: center; flex: none; height: 25px; margin-bottom: 1px; padding-left: 4px; overflow: hidden; border-radius: 3px; background: linear-gradient(#fcfbf8, #ece9d8); }
.bar-row { display: flex; justify-content: space-between; }
.short { padding-right: 2px; }
.tail { flex: none; width: 110px; }
.grip { flex: none; width: 3px; height: 15px; margin-right: 1px; background: repeating-linear-gradient(#c2bfae 0 3px, transparent 3px 5px); }
.grip.mid { margin-left: 6px; margin-right: 2px; }
.sep { flex: none; width: 1px; height: 15px; margin: 0 1px 0 4px; background: #c5c2b2; }
.tb { height: 22px; padding: 0 4px; gap: 3px; }
.tb.on { padding: 0 3px; border: 1px solid #316ac5; background: #e1e6ec; }
.tb:disabled, .drop:disabled { color: #aca899; }
.arr { flex: none; width: 6px; height: 3px; background: currentColor; clip-path: polygon(0 0, 100% 0, 50% 100%); }
.drop { height: 22px; padding: 0 2px 0 3px; }
.drop:disabled { padding: 0 4px; }

.combos { display: flex; gap: 3px; padding: 0 2px; }
.combo { position: relative; display: flex; flex: none; width: 69px; height: 18px; background: #fff; }
.combo.c-s { width: 56px; }
.combo.c-off { width: 58px; }
.combo select { appearance: none; width: 100%; padding-left: 1px; outline: none; }
.combo::before { content: ""; position: absolute; right: 0; top: 1px; width: 11px; height: 16px; background: #f1efe4; }
.combo::after { content: ""; position: absolute; right: 3px; top: 8px; width: 6px; height: 3px; background: #000; clip-path: polygon(0 0, 100% 0, 50% 100%); }
.combo.off { width: 56px; height: 19px; border: 1px solid #aca899; background: #f6f4ec; }
.combo.off::after { background: #aca899; }

/* Drawing area */
.canvas { position: relative; flex: 1; min-height: 0; display: flex; margin-top: -1px; background: #000; }
.model { width: 625px; height: calc(100% - 1px); border-right: 1px solid #f00; border-bottom: 2px solid #f00; background: #adadad; }
.slab { width: 68px; height: 60px; margin: 98px 0 0 49px; background: #e600e6; }
.axis { position: absolute; left: 625px; bottom: 0; }

.snap { margin-top: 2px; margin-bottom: 5px; }
.spin { position: relative; display: flex; align-items: center; flex: none; gap: 2px; margin-right: 6px; color: #aca899; font-family: "Liberation Mono", monospace; font-size: 10px; }
.spin.end { margin-right: 0; }
.spin input { width: 58px; height: 19px; padding-right: 18px; border: 1px solid #aca899; text-align: right; font-size: 12px; font-family: "Liberation Serif", serif; }
.ud { position: absolute; right: 18px; width: 5px; height: 13px; background: linear-gradient(#aca899, #aca899); clip-path: polygon(50% 0, 100% 25%, 0 25%, 50% 0, 50% 100%, 0 75%, 100% 75%, 50% 100%); }
.flag { appearance: none; flex: none; width: 12px; height: 12px; margin-left: 2px; border: 1px solid #aca899; }

.detail { flex: none; display: flex; height: 127px; }
.detail-edge { flex: none; width: 12px; padding-left: 2px; background: repeating-linear-gradient(#999 0 2px, transparent 2px 4px) 4px 13px / 2px 100% no-repeat; }
.detail-main { flex: 1; min-width: 0; display: flex; flex-direction: column; }
.detail-bar { height: 24px; margin-bottom: 0; padding-left: 0; }
.nav { width: 23px; height: 22px; }
.total { margin-left: 7px; }
.detail-frame { flex: 1; overflow: hidden; padding: 1px 0 0 1px; border-top: 1px solid #7f9db9; border-left: 1px solid #7f9db9; background: #fff; }
.detail-grid { width: 100%; min-width: 753px; }
.d1 { width: 33px; }
.d2 { width: 73px; }
.d3 { width: 56px; }
.d4 { width: 36px; }
.d5 { width: 33px; }
.d6 { width: 201px; }
.d7 { width: 166px; }
.grid tbody .hot-num { background: #ffd28c; color: #57004c; }
.grid .before-edit { border-right-color: #000; }
.grid .edit { background: #dfe9f6; }

/* Node settings window */
.dialog {
  position: absolute;
  left: 228px;
  top: 220px;
  width: 870px;
  height: 450px;
  display: flex;
  flex-direction: column;
  border: 4px solid #7385dd;
  border-top: 0;
  border-radius: 7px 7px 0 0;
  background: #ece9d8;
  outline: 1px solid #5259bd;
  outline-offset: -1px;
}
.dlg-title { display: flex; align-items: center; flex: none; height: 30px; margin: 0 -3px; padding: 3px 5px 0 5px; gap: 3px; border-radius: 6px 6px 0 0; background: linear-gradient(#5a70cc 0, #a3baf0 3px, #7b95e0 9px, #7b98e3 17px, #85a9ee 26px, #6f83d6 30px); }
.dlg-title h1 { flex: 1; padding-left: 1px; font-size: 14px; font-weight: bold; color: #dbe6fb; }
.dlg-title button { width: 20px; height: 20px; border: 1px solid #c4d2f5; border-radius: 3px; background: linear-gradient(135deg, #6d92f0, #3a63dc); }
.dlg-title .x { background: linear-gradient(135deg, #c88292, #a85768); }
.dlg-body { flex: 1; min-height: 0; display: flex; flex-direction: column; padding: 3px 2px 0 3px; }
.list-frame { flex: none; display: flex; justify-content: space-between; height: 369px; overflow: hidden; padding: 1px; border: 1px solid #7f9db9; background: #fff; }
.node-grid { width: 543px; }
.n-num { width: 21px; }
.n-name { width: 261px; }
.node-grid td:nth-child(2) { background: #ffffe1; }
.node-grid .picked-row th { background: #ffd28c; color: #57004c; }
.node-grid .picked-row td:nth-child(3) { background: #dfe9f6; outline: 1px dotted #000; outline-offset: -2px; }
.scroll { width: 17px; background: #f3f2ec; }
.scroll button { width: 15px; height: 16px; margin-top: 1px; border: 1px solid #b4c8f6; border-radius: 2px; background: #c6d6fc; }
.thumb { width: 15px; height: 200px; border: 1px solid #b4c8f6; border-radius: 2px; background: linear-gradient(to right, #cddcfd, #bacbf8); }
.dlg-foot { display: flex; justify-content: flex-end; gap: 15px; padding: 11px 14px 0 0; }
.push { width: 72px; height: 23px; border: 1px solid #003c74; border-radius: 3px; background: linear-gradient(#fff, #f0efe8); }
.push.main { box-shadow: inset 0 0 0 2px #a5bdf0; }

.preview { position: absolute; right: 3px; bottom: 44px; width: 310px; height: 310px; display: flex; flex-direction: column; padding: 0 4px 4px 3px; background: #0a3fd8; border: 1px solid #0020a8; border-top: 0; }
.preview h2 { flex: none; height: 22px; margin: 0 -4px 0 -3px; padding: 2px 0 0 3px; line-height: 20px; font-size: 13px; font-weight: bold; color: #fff; background: linear-gradient(#0a48c8, #2f84fa 3px, #0058ea 8px, #0567fc 18px, #0046d0); }
.preview-in { flex: 1; display: flex; flex-direction: column; background: #ece9d8; }
.drawing { position: relative; height: 204px; border: 2px solid #fff; border-right-color: #aca899; border-bottom-color: #aca899; background: #000; overflow: hidden; }
.cad { fill: #0e0; font-family: "Liberation Serif", serif; }
.cad.big { font-size: 20px; }
.cad.small { font-size: 18px; }
.cad.title { fill: #0ff; font-family: "Noto Sans CJK SC", sans-serif; font-size: 26px; font-weight: 300; }
.dim-edit { position: absolute; left: 70px; top: 57px; width: 26px; height: 23px; padding-left: 1px; font-size: 20px; color: #fff; background: linear-gradient(to right, #316ac5 11px, #fff 11px); }
.hint { flex: 1; display: flex; align-items: flex-start; padding-top: 13px; border: 1px solid #fff; border-bottom-color: #aca899; line-height: 12px; }
.hint span { flex: none; width: 65px; }

/* Hand-drawn callouts over everything */
.marks { position: absolute; left: 0; top: 0; pointer-events: none; }
```
